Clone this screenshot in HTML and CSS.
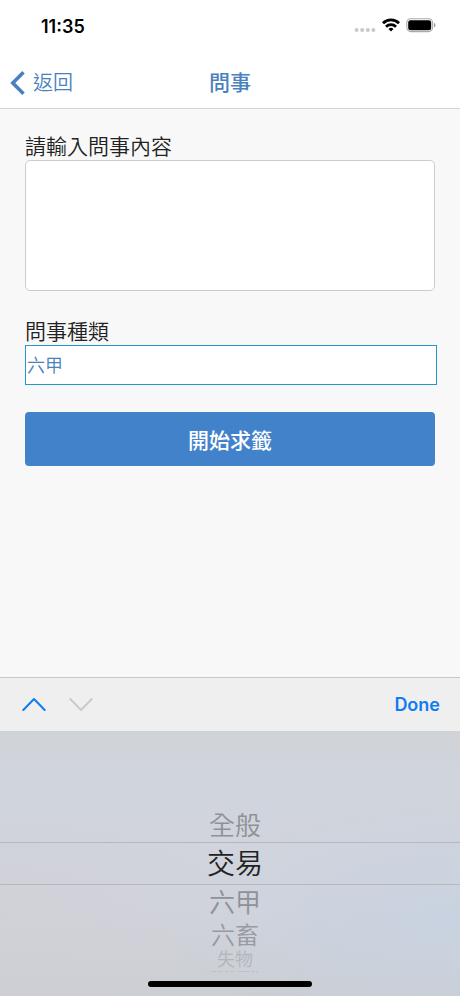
FILE: index.html
```html
<!DOCTYPE html>
<html lang="zh-Hant">
<head>
<meta charset="utf-8">
<meta name="viewport" content="width=device-width, initial-scale=1">
<title>問事</title>
<link rel="stylesheet" href="styles.css">
</head>
<body>
<div class="status">
  <time class="clock">11:35</time>
  <div class="status-icons">
    <svg class="signal" width="22" height="20" viewBox="0 0 22 20" fill="#c9c9c9" aria-hidden="true">
      <circle cx="2.6" cy="14" r="2"/><circle cx="8.2" cy="14" r="2"/><circle cx="13.8" cy="14" r="2"/><circle cx="19.4" cy="14" r="2"/>
    </svg>
    <svg width="18" height="20" viewBox="0 0 18 20" fill="none" stroke="#000" stroke-width="2.8" aria-hidden="true">
      <path d="M1 7.200a11.3 11.3 0 0 1 16 0"/>
      <path d="M4 10.700a7.1 7.1 0 0 1 10 0"/>
      <path d="M9 15.600l-2.500-2.500a3.500 3.500 0 0 1 5 0z" fill="#000" stroke="none"/>
    </svg>
    <svg width="30" height="20" viewBox="0 0 30 20" aria-hidden="true">
      <rect x=".8" y="2.800" width="25.800" height="12.800" rx="4" fill="#fff" stroke="#aaa" stroke-width="1.100"/>
      <rect x="2.200" y="4.200" width="23" height="10" rx="2.300"/>
      <path d="M28 7v4.400c.9-.4 1.400-1.200 1.400-2.200S28.900 7.400 28 7z" fill="#999"/>
    </svg>
  </div>
</div>
<header class="nav">
  <a class="back" href="#">
    <svg width="16" height="24" viewBox="0 0 16 24" fill="none" stroke="#4981be" stroke-width="3.600" aria-hidden="true"><path d="M13.500 1.300L2.800 12l10.700 10.700"/></svg>
    <span>返回</span>
  </a>
  <h1 class="title">問事</h1>
</header>
<main class="content">
  <div class="field">
    <label for="question">請輸入問事內容</label>
    <textarea id="question" class="question"></textarea>
  </div>
  <div class="field">
    <label for="kind">問事種類</label>
    <select id="kind" class="kind">
      <option>全般</option>
      <option>交易</option>
      <option selected>六甲</option>
      <option>六畜</option>
      <option>失物</option>
    </select>
  </div>
  <button class="submit" type="button">開始求籤</button>
</main>
<footer class="keyboard">
  <div class="toolbar">
    <button class="step" type="button" aria-label="上一個">
      <svg width="24" height="16" viewBox="0 0 24 16" fill="none" stroke="#0f7cf2" stroke-width="2" stroke-linecap="round" stroke-linejoin="round"><path d="M1.300 13L12 2l10.700 11"/></svg>
    </button>
    <button class="step" type="button" aria-label="下一個" disabled>
      <svg width="24" height="16" viewBox="0 0 24 16" fill="none" stroke="#c9cacc" stroke-width="2" stroke-linecap="round" stroke-linejoin="round"><path d="M1.300 2L12 13l10.700-11"/></svg>
    </button>
    <button class="done" type="button">Done</button>
  </div>
  <ul class="wheel" role="listbox" aria-label="問事種類">
    <li class="row" role="option">全般</li>
    <li class="row current" role="option" aria-selected="true">交易</li>
    <li class="row" role="option">六甲</li>
    <li class="row far" role="option">六畜</li>
    <li class="row edge" role="option">失物</li>
    <li class="rim" role="presentation">
      <svg width="48" height="6" viewBox="0 0 48 6" fill="none" stroke="#bcbfc4" aria-hidden="true"><path d="M1 2.500h21M27 2.500h20" stroke-dasharray="4 1 6 2"/></svg>
    </li>
  </ul>
  <div class="home"></div>
</footer>
</body>
</html>
```
FILE: styles.css
```css
* {
  box-sizing: border-box;
}

body {
  margin: 0;
  min-height: 100vh;
  display: flex;
  flex-direction: column;
  background: #f8f8f8;
  color: #222;
  font-family: Inter, "Noto Sans CJK TC", sans-serif;
  font-size: 21px;
  font-weight: 350;
}

button,
select,
textarea {
  margin: 0;
  font: inherit;
}

button {
  padding: 0;
  border: 0;
  background: none;
}

.status {
  display: flex;
  justify-content: space-between;
  align-items: center;
  height: 52px;
  padding: 0 24px 0 41px;
  background: #fff;
}

.clock {
  color: #000;
  font-size: 18px;
  font-weight: 600;
}

.status-icons {
  display: flex;
  gap: 6px;
}

.nav {
  display: grid;
  grid-template-columns: 1fr auto 1fr;
  align-items: center;
  height: 57px;
  padding: 6px 10px 0;
  background: #fff;
  border-bottom: 1px solid #d4d4d4;
  color: #4981be;
}

.back {
  display: flex;
  align-items: center;
  gap: 7px;
  color: inherit;
  font-size: 20px;
  line-height: 32px;
  text-decoration: none;
}

.title {
  margin: 0;
  font-size: 21px;
  font-weight: 500;
  line-height: 32px;
}

.content {
  flex: 1;
  display: flex;
  flex-direction: column;
  gap: 27px;
  padding: 24px 25px;
}

.field {
  display: flex;
  flex-direction: column;
  line-height: 27px;
}

.question {
  height: 131px;
  padding: 8px;
  border: 1px solid #ccc;
  border-radius: 5px;
  background: #fff;
  resize: none;
}

.kind {
  height: 40px;
  margin-right: -2px;
  padding: 1px 1px 0;
  appearance: none;
  border: 1px solid #2299cb;
  border-radius: 0;
  background: #fff;
  color: #4981be;
  font-size: 18px;
}

.submit {
  height: 54px;
  border-radius: 4px;
  background: #4282ca;
  color: #fff;
  font-weight: 500;
}

.keyboard {
  position: relative;
}

.toolbar {
  display: flex;
  align-items: center;
  gap: 23px;
  height: 54px;
  padding: 0 20px 0 22px;
  border-top: 1px solid #c6c7c9;
  background: #efeff0;
}

.step {
  display: flex;
}

.done {
  margin-left: auto;
  color: #0f7cf2;
  font-size: 18px;
  font-weight: 600;
}

.wheel {
  height: 265px;
  margin: 0;
  padding: 77px 0 0;
  list-style: none;
  background:
    radial-gradient(ellipse at 100% 72%, rgb(200 210 225 / 90%), rgb(200 210 225 / 0%) 45%),
    radial-gradient(ellipse at 0 68%, rgb(209 208 215 / 90%), rgb(209 208 215 / 0%) 40%),
    linear-gradient(#d0d3d6, #d0d4dc 15%, #d1d4dc 65%, #cbced2);
}

.row {
  height: 34px;
  padding-left: 10px;
  color: #8f9195;
  font-size: 26px;
  line-height: 36px;
  text-align: center;
}

.current {
  height: 43px;
  border: 1px solid #b5b8bf;
  border-width: 1px 0;
  color: #222;
  font-size: 28px;
  line-height: 43px;
}

.far {
  height: 32px;
  color: #989a9e;
  font-size: 24px;
  line-height: 34px;
}

.edge {
  height: 18px;
  color: #b2b5ba;
  font-size: 18px;
  line-height: 18px;
}

.rim {
  display: flex;
  justify-content: center;
  padding-left: 10px;
}

.home {
  position: absolute;
  bottom: 9px;
  left: 50%;
  width: 164px;
  height: 6px;
  margin-left: -82px;
  border-radius: 3px;
  background: #000;
}
```
